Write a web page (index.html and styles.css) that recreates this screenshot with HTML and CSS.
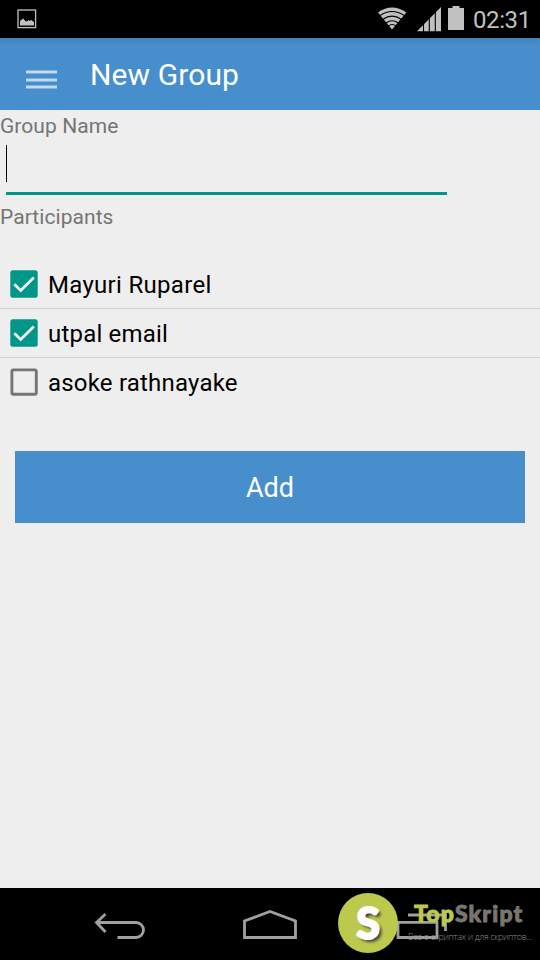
FILE: index.html
```
<!DOCTYPE html>
<html lang="en">
<head>
<meta charset="utf-8">
<title>New Group</title>
<link rel="stylesheet" href="styles.css">
</head>
<body>
<div class="status">
  <svg class="picture" width="20" height="20" viewBox="0 0 20 20"><rect x="1" y="1" width="17.6" height="17.6" fill="none" stroke="#c0c0c0" stroke-width="1.3"/><path d="M3 16.500V12L6 9.500l3 3 1.500-.5 1-1 1 1 1.500-1 3 2v3.500z" fill="#c0c0c0"/></svg>
  <div class="indicators">
    <svg width="96" height="38" viewBox="0 0 96 38"><g fill="#c0c0c0"><path d="M0 12.500Q14 2.500 28.300 12.500L14 29.500z"/><path d="M63 31.200H39L63 7z"/><path d="M70 8h4.500V6h7v2H86v22H70z"/></g><g fill="none" stroke="#000" stroke-width="1.100"><path d="M2 15.500Q14 7.500 26.300 15.500M5 19.300Q14 13 23.300 19.300M8 23Q14 18.500 20.300 23M10.500 26Q14 23 18 26"/><path d="M45.500 7v25M51.300 7v25M57.300 7v25"/></g></svg>
    <span class="clock">02:31</span>
  </div>
</div>
<header class="bar">
  <div class="menu"><i></i><i></i><i></i></div>
  <h1>New Group</h1>
</header>
<main>
  <label class="label">Group Name</label>
  <div class="field"><span class="caret"></span></div>
  <div class="label participants">Participants</div>
  <ul>
    <li><svg width="28" height="28" viewBox="0 0 28 28"><rect x=".3" y=".3" width="27.400" height="27.400" rx="2.500" fill="#009688"/><path d="M4.300 14.200l6.400 6.300L23.800 7.400" fill="none" stroke="#eee" stroke-width="2.800"/></svg><span class="wide">Mayuri Ruparel</span></li>
    <li><svg width="28" height="28" viewBox="0 0 28 28"><rect x=".3" y=".3" width="27.400" height="27.400" rx="2.500" fill="#009688"/><path d="M4.300 14.200l6.400 6.300L23.800 7.400" fill="none" stroke="#eee" stroke-width="2.800"/></svg><span>utpal email</span></li>
    <li><svg width="28" height="28" viewBox="0 0 28 28"><rect x="1.900" y="1.900" width="24.400" height="24.400" rx="1.500" fill="none" stroke="#757575" stroke-width="2.900"/></svg><span>asoke rathnayake</span></li>
  </ul>
  <button class="add">Add</button>
</main>
<footer class="nav">
  <svg width="540" height="72" viewBox="0 0 540 72"><g fill="none" stroke="#a0a0a0" stroke-width="2.800"><path d="M105.500 26L96.500 34.500 105.500 44M97 34.500H136A7.500 7.500 0 0 1 136 49.500H117.500"/><path d="M244.500 49.500V33L270 23.500 295.500 33V49.500z"/><path d="M398 34.300H437V49.500H398zM408 27h37.500v16"/></g></svg>
  <div class="brand">
    <div class="disc">S</div>
    <div class="words"><div class="name"><b>Top</b>Skript</div><div class="tag">Все о скриптах и для скриптов...</div></div>
  </div>
</footer>
</body>
</html>
```
FILE: styles.css
```
* { box-sizing: border-box; }
body { margin: 0; width: 540px; height: 960px; overflow: hidden; display: flex; flex-direction: column; background: #eee; font-family: Roboto, "Liberation Sans", sans-serif; }
svg { display: block; flex: none; }
.status { height: 38px; background: #000; display: flex; align-items: center; justify-content: space-between; padding-left: 17px; }
.indicators { display: flex; width: 162px; height: 38px; }
.clock { font-size: 24px; line-height: 40px; color: #c0c0c0; white-space: nowrap; letter-spacing: -.4px; margin-left: -1px; }
.bar { height: 72px; background: linear-gradient(#4382bb, #478ecc 8px); display: flex; padding-left: 26px; color: #fff; }
.menu { width: 32px; margin: 32px 32px 0 0; display: flex; flex-direction: column; gap: 4px; padding-right: 1px; }
.menu i { height: 4px; background: #c4dcf0; border: solid #82b3dd; border-width: 1px 0; }
.menu i:nth-child(3) { margin-top: -1px; }
.bar h1 { margin: 0; font-size: 30px; font-weight: 400; line-height: 73px; letter-spacing: .1px; }
main { height: 778px; display: flex; flex-direction: column; }
.label { color: #757575; font-size: 21px; line-height: 32px; height: 32px; letter-spacing: .06px; }
.field { width: 441px; height: 53px; margin-left: 6px; border-bottom: 3px solid #009688; padding-top: 3px; }
.caret { display: block; width: 1px; height: 37px; background: #000; }
.participants { margin-top: 6px; }
ul { list-style: none; margin: 27px 0 0; padding: 0; }
li { height: 49px; display: flex; align-items: center; padding-left: 10px; font-size: 24px; color: #000; border-bottom: 1px solid #d2d2d2; }
li:last-child { border-color: transparent; }
li span { margin: 2px 0 0 10px; white-space: nowrap; letter-spacing: .2px; }
li .wide { letter-spacing: .3px; }
.add { display: block; width: 510px; height: 72px; margin: 44px 15px 0; padding: 1px 0 0; border: 0; background: #478ecc; color: #fff; font: 27px Roboto, sans-serif; }
.nav { height: 72px; background: #000; position: relative; }
.brand { position: absolute; left: 338px; top: 5px; display: flex; }
.disc { width: 60px; height: 60px; border-radius: 50%; background: #bdc94c; color: #fff; font: 900 43px/59px Lato, sans-serif; text-align: center; -webkit-text-stroke: 2px #fff; text-shadow: 3px 3px 3px #444; }
.words { padding: 5px 0 0 10px; white-space: nowrap; }
.name { padding-left: 6px; font: 900 23px/30px Lato, sans-serif; letter-spacing: 1.2px; color: #77776f; -webkit-text-stroke: .9px currentColor; }
.name b { color: #bdc94c; font-weight: 900; }
.tag { font: 300 9px/14px "Open Sans", sans-serif; letter-spacing: -.35px; color: #8c8c84; margin-top: 2px; }
```
